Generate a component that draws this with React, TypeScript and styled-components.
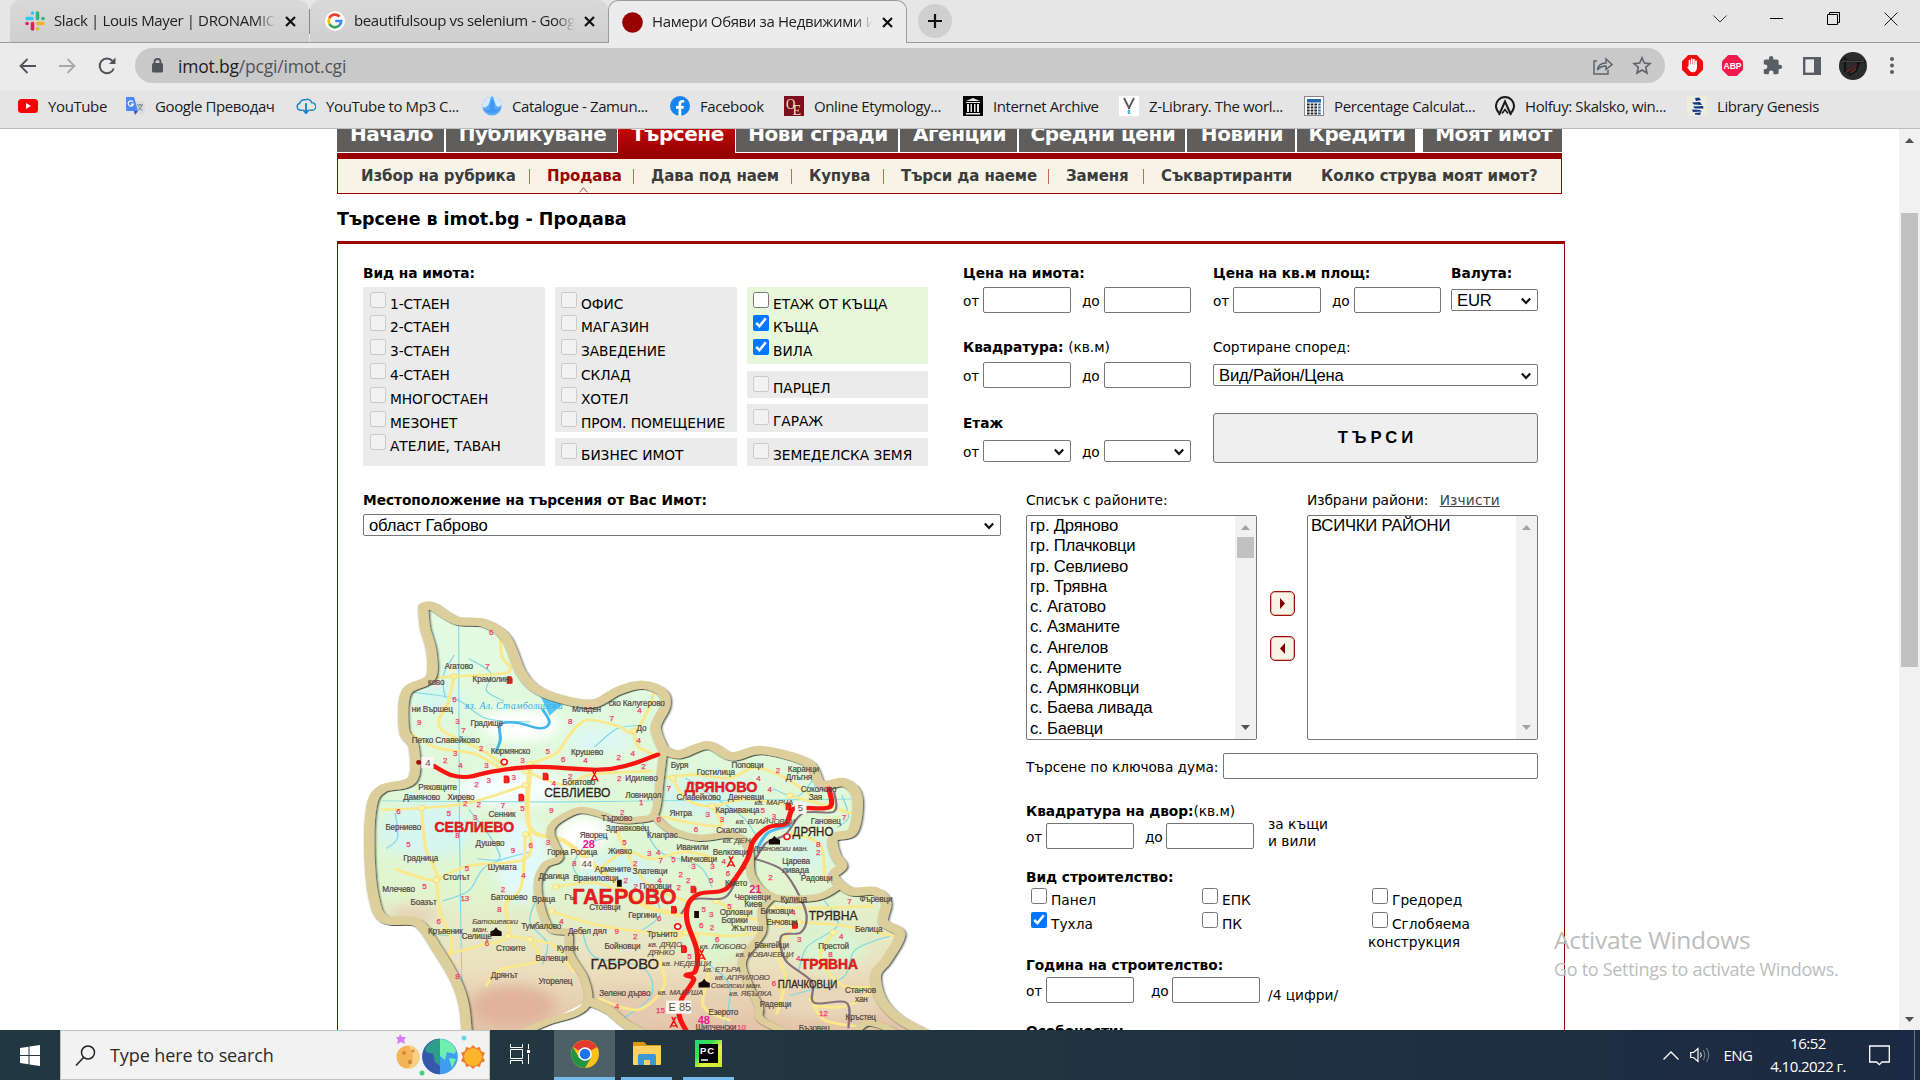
import React from "react";
import styled, { createGlobalStyle, css } from "styled-components";

const Global = createGlobalStyle`
  *, *::before, *::after { box-sizing: border-box; }
  body { margin: 0; background: #fff; overflow: hidden; }
`;

const ui = `"Open Sans", "Noto Sans", sans-serif`;
const verdana = `"DejaVu Sans", Verdana, sans-serif`;
const arial = `"Liberation Sans", Arial, sans-serif`;

const Screen = styled.div`
  width: 1920px;
  height: 1080px;
  display: flex;
  flex-direction: column;
  overflow: hidden;
  position: relative;
  background: #fff;
  font-family: ${verdana};
`;

/* ---------- browser chrome ---------- */

const TabStrip = styled.div`
  height: 43px;
  flex: none;
  display: flex;
  align-items: flex-start;
  padding-left: 10px;
  background: #e6e6e6;
  border-bottom: 1px solid #9c9c9c;
  font-family: ${ui};
`;

const Tab = styled.div<{ $active?: boolean; $w: number }>`
  width: ${(p) => p.$w}px;
  height: 42px;
  display: flex;
  align-items: center;
  padding: 0 5px 0 15px;
  background: linear-gradient(#d9d9d9, #cfcfcf);
  border-radius: 10px 10px 0 0;
  ${(p) =>
    p.$active &&
    css`
      height: 43px;
      background: #ececec;
      border: 1px solid #9c9c9c;
      border-bottom: 0;
      padding-left: 13px;
    `}
`;

const TabSplit = styled.div`
  width: 1px;
  height: 25px;
  margin-top: 9px;
  background: #8a8a8a;
`;

const TabTitle = styled.div`
  flex: 1;
  margin: 0 0 2px 9px;
  font-size: 15px;
  line-height: 22px;
  letter-spacing: -0.37px;
  color: #202124;
  white-space: nowrap;
  overflow: hidden;
  mask-image: linear-gradient(90deg, #000 91%, transparent);
`;

const TabClose = styled.div`
  width: 28px;
  display: flex;
  justify-content: center;
`;

const NewTab = styled.div`
  width: 34px;
  height: 34px;
  margin: 4px 0 0 11px;
  border-radius: 50%;
  background: #cfcfcf;
  display: flex;
  align-items: center;
  justify-content: center;
`;

const WindowButtons = styled.div`
  margin-left: auto;
  height: 37px;
  display: flex;
  align-items: center;
`;

const WinBtn = styled.div<{ $w: number }>`
  width: ${(p) => p.$w}px;
  display: flex;
  justify-content: center;
`;

const Toolbar = styled.div`
  height: 47px;
  flex: none;
  display: flex;
  align-items: center;
  padding-bottom: 2px;
  background: #ebebeb;
  font-family: ${ui};
`;

const ToolIcon = styled.div<{ $w: number }>`
  width: ${(p) => p.$w}px;
  display: flex;
  align-items: center;
  justify-content: center;
`;

const Address = styled.div`
  width: 1530px;
  height: 35px;
  margin-left: 2px;
  border-radius: 18px;
  background: #c9c9c9;
  display: flex;
  align-items: center;
  padding: 0 4px 0 17px;
`;

const Url = styled.div`
  flex: 1;
  margin-left: 14px;
  font-size: 17.5px;
  letter-spacing: -0.2px;
  color: #505357;
  b {
    font-weight: 400;
    color: #1c1d20;
  }
`;

const Bookmarks = styled.div`
  height: 39px;
  flex: none;
  display: flex;
  align-items: center;
  padding: 0 0 7px 18px;
  background: #e5e5e5;
  border-bottom: 1px solid #bdbdbd;
  font-family: ${ui};
`;

const Bookmark = styled.div<{ $w: number }>`
  width: ${(p) => p.$w}px;
  display: flex;
  align-items: center;
  gap: 10px;
  font-size: 15px;
  line-height: 20px;
  letter-spacing: -0.39px;
  white-space: nowrap;
  color: #1b1b1b;
  svg {
    flex: none;
  }
`;

/* ---------- site ---------- */

const PageArea = styled.div`
  height: 901px;
  flex: none;
  display: flex;
  overflow: hidden;
`;

const Site = styled.div`
  flex: 1;
  padding-left: 337px;
  overflow: hidden;
`;

const PageScroll = styled.div`
  width: 21px;
  height: 901px;
  background: #f1f1f1;
  display: flex;
  flex-direction: column;
  align-items: center;
  padding: 9px 0 8px;
`;

const PageThumb = styled.div`
  width: 17px;
  height: 454px;
  margin: 70px 0 auto;
  background: #c1c1c1;
`;

const Nav = styled.div`
  width: 1225px;
  height: 24px;
  display: flex;
  align-items: flex-start;
  overflow: hidden;
`;

const NavTab = styled.div<{ $w: number; $active?: boolean; $gap?: number }>`
  width: ${(p) => p.$w}px;
  height: ${(p) => (p.$active ? 24 : 23)}px;
  margin-right: ${(p) => p.$gap ?? 0}px;
  padding-left: 2px;
  background: ${(p) => (p.$active ? "linear-gradient(#c00808, #990000)" : "#5f5e5c")};
  color: #fff;
  font-weight: 700;
  font-size: 20px;
  line-height: 10px;
  letter-spacing: -0.45px;
  text-align: center;
  white-space: nowrap;
`;

const SubNav = styled.div`
  width: 1225px;
  height: 41px;
  display: flex;
  align-items: center;
  padding: 0 0 0 23px;
  background: #f7f4e7;
  border: 1px solid #990000;
  border-top: 6px solid #990000;
`;

const SubItem = styled.div<{ $w: number; $active?: boolean }>`
  width: ${(p) => p.$w}px;
  height: 34px;
  position: relative;
  font-size: 15px;
  font-weight: 700;
  line-height: 34px;
  letter-spacing: -0.1px;
  white-space: nowrap;
  color: ${(p) => (p.$active ? "#990000" : "#3c3c3c")};
  svg {
    position: absolute;
    left: 32px;
    bottom: 0;
  }
`;

const SubSep = styled.div`
  width: 1px;
  height: 15px;
  margin-right: 17px;
  background: #c4694a;
`;

const Heading = styled.h1`
  margin: 13px 0 10px;
  height: 24px;
  font-size: 17.5px;
  line-height: 24px;
  letter-spacing: -0.05px;
  font-weight: 700;
  color: #000;
`;

const FormBox = styled.div`
  width: 1228px;
  height: 900px;
  padding: 19px 26px 0 25px;
  border: 1px solid #990000;
  border-top-width: 3px;
`;

const Row = styled.div<{ $h?: number; $gap?: number }>`
  display: flex;
  align-items: flex-start;
  gap: ${(p) => p.$gap ?? 0}px;
  ${(p) => p.$h && `height: ${p.$h}px;`}
`;

const Col = styled.div<{ $w?: number; $h?: number }>`
  flex: none;
  display: flex;
  flex-direction: column;
  ${(p) => p.$w && `width: ${p.$w}px;`}
  ${(p) => p.$h && `height: ${p.$h}px;`}
`;

const Label = styled.div<{ $plain?: boolean; $mb?: number }>`
  height: 20px;
  margin-bottom: ${(p) => p.$mb ?? 4}px;
  font-size: 13.75px;
  line-height: 20px;
  font-weight: ${(p) => (p.$plain ? 400 : 700)};
  letter-spacing: ${(p) => (p.$plain ? -0.08 : -0.05)}px;
  white-space: nowrap;
  color: #000;
  span {
    font-weight: 400;
  }
`;

const OptionCard = styled.div<{ $h: number; $on?: boolean; $mb?: number; $pad?: number; $top?: number }>`
  height: ${(p) => p.$h}px;
  margin-bottom: ${(p) => p.$mb ?? 0}px;
  padding: ${(p) => p.$top ?? 4.6}px 0 0 ${(p) => p.$pad ?? 6}px;
  background: ${(p) => (p.$on ? "#e6f8d9" : "#ebebeb")};
`;

const OptionRow = styled.label`
  height: 23.8px;
  display: flex;
  align-items: flex-start;
  gap: 4px;
  font-size: 13.75px;
  line-height: 25.6px;
  letter-spacing: -0.05px;
  white-space: nowrap;
  color: #000;
`;

const Check = styled.input`
  width: 16px;
  height: 16px;
  margin: 0;
  flex: none;
`;

const Range = styled.div<{ $a?: number; $b?: number; $c?: number; $w?: number }>`
  display: grid;
  grid-template-columns:
    ${(p) => p.$a ?? 20}px ${(p) => p.$w ?? 88}px ${(p) => p.$b ?? 11}px ${(p) => p.$c ?? 22}px
    ${(p) => p.$w ?? 87}px;
  align-items: center;
  font-size: 13.75px;
  letter-spacing: -0.2px;
  color: #000;
`;

const RangeWord = styled.span`
  padding-top: 2px;
  line-height: 18px;
`;

const Field = styled.input`
  width: 100%;
  height: 26px;
  padding: 0 4px;
  border: 1px solid #767676;
  border-radius: 2px;
  background: #fff;
  font: 16.67px ${arial};
`;

const SelectBox = styled.div<{ $w?: number }>`
  ${(p) => (p.$w ? `width: ${p.$w}px;` : "")}
  height: 22px;
  display: flex;
  align-items: center;
  justify-content: space-between;
  padding: 1px 6px 0 5px;
  border: 1px solid #767676;
  border-radius: 2px;
  background: #fff;
  font-family: ${arial};
  font-size: 16.67px;
  line-height: 19px;
  letter-spacing: -0.17px;
  color: #000;
`;

const SearchButton = styled.button`
  width: 325px;
  height: 50px;
  padding: 0 0 0 4px;
  border: 1px solid #767676;
  border-radius: 3px;
  background: #efefef;
  font: 700 16.67px ${arial};
  letter-spacing: 4px;
  color: #000;
`;

const ListBox = styled.div`
  width: 231px;
  height: 225px;
  display: flex;
  border: 1px solid #767676;
  border-radius: 2px;
  background: #fff;
  overflow: hidden;
`;

const ListItems = styled.div`
  flex: 1;
  padding-left: 3px;
  font-family: ${arial};
  font-size: 16.67px;
  line-height: 20.25px;
  letter-spacing: -0.22px;
  color: #000;
  white-space: nowrap;
`;

const ListScroll = styled.div`
  width: 21px;
  background: #f1f1f1;
  display: flex;
  flex-direction: column;
  align-items: center;
  justify-content: space-between;
  padding: 9px 0;
`;

const ListThumb = styled.div`
  width: 17px;
  height: 21px;
  margin: 7px 0 auto;
  background: #c1c1c1;
`;

const Movers = styled.div`
  width: 50px;
  padding: 76px 0 0 13px;
  display: flex;
  flex-direction: column;
  gap: 20px;
`;

const Mover = styled.div`
  width: 25px;
  height: 25px;
  display: flex;
  align-items: center;
  justify-content: center;
  border: 1px solid #99100c;
  border-radius: 5px;
  box-shadow: inset 0 0 0 1px #e6b3a2;
  background: #f8f4e8;
`;

const Clear = styled.span`
  margin-left: 7px;
  color: #444;
  letter-spacing: 0.15px;
  text-decoration: underline;
`;

const Keyword = styled.div`
  display: grid;
  grid-template-columns: 197px 315px;
  align-items: center;
  margin: 13px 0 22px;
  font-size: 13.75px;
  letter-spacing: -0.05px;
  color: #000;
  white-space: nowrap;
`;

const KeywordText = styled.span`
  padding-top: 2px;
`;

const Note = styled.div<{ $mt: number }>`
  margin-top: ${(p) => p.$mt}px;
  font-size: 13.75px;
  line-height: 17px;
  white-space: nowrap;
  color: #000;
`;

const BuildGrid = styled.div`
  height: 68px;
  display: grid;
  grid-template-columns: 171px 170px 171px;
  grid-template-rows: 24px 22px 17px;
  align-content: start;
  padding: 1px 0 0 5px;
  font-size: 13.75px;
`;

const BuildRow = styled(OptionRow)`
  height: 24px;
  letter-spacing: 0;
`;

const BuildWrap = styled.div`
  grid-column: 3;
  margin-left: -4px;
  line-height: 17px;
  letter-spacing: -0.1px;
`;

/* ---------- overlay & taskbar ---------- */

const Watermark = styled.div`
  position: absolute;
  left: 1554px;
  top: 924px;
  font-family: ${ui};
  color: #bdbdbd;
  white-space: nowrap;
`;

const MarkTitle = styled.div`
  font-size: 24.5px;
  line-height: 32px;
  letter-spacing: -0.3px;
`;

const MarkText = styled.div`
  font-size: 18px;
  line-height: 26px;
  letter-spacing: -0.3px;
`;

const Taskbar = styled.div`
  height: 50px;
  flex: none;
  display: flex;
  align-items: stretch;
  background: linear-gradient(90deg, #213840 0%, #22363f 45%, #1e2f42 75%, #1b2942 100%);
  font-family: ${ui};
  color: #fff;
`;

const Start = styled.div`
  width: 60px;
  display: flex;
  align-items: center;
  justify-content: center;
`;

const SearchBar = styled.div`
  width: 430px;
  display: flex;
  align-items: center;
  padding: 0 4px 0 14px;
  background: #f2f2f2;
  border: 1px solid #c3c3c3;
  color: #2b2b2b;
  font-size: 18px;
`;

const SearchText = styled.div`
  flex: 1;
  margin-left: 14px;
  letter-spacing: -0.1px;
`;

const Task = styled.div<{ $w: number; $hot?: boolean; $run?: boolean; $ml?: number }>`
  width: ${(p) => p.$w}px;
  margin-left: ${(p) => p.$ml ?? 0}px;
  display: flex;
  align-items: center;
  justify-content: center;
  background: ${(p) => (p.$hot ? "#4d6068" : "transparent")};
  border-bottom: 3px solid ${(p) => (p.$run ? "#76b9ed" : "transparent")};
`;

const Tray = styled.div`
  margin-left: auto;
  display: flex;
  align-items: center;
`;

const TrayCell = styled.div<{ $w: number }>`
  width: ${(p) => p.$w}px;
  display: flex;
  justify-content: center;
  font-size: 15px;
  letter-spacing: -0.5px;
`;

const Clock = styled.div`
  width: 88px;
  margin-right: 6px;
  text-align: center;
  font-size: 15px;
  line-height: 23px;
  letter-spacing: -0.55px;
`;

const DesktopEdge = styled.div`
  width: 6px;
  height: 50px;
  border-left: 1px solid #6d7785;
`;

/* ---------- small drawings ---------- */

const Cross = () => (
  <svg width="11" height="11" viewBox="0 0 11 11">
    <path d="M1 1L10 10M10 1L1 10" stroke="#111" strokeWidth="2.2" />
  </svg>
);

const Chevron = () => (
  <svg width="10" height="8" viewBox="0 0 10 8">
    <path d="M0.8 1.6L5 5.9L9.2 1.6" fill="none" stroke="#111" strokeWidth="2.2" />
  </svg>
);

const Tri = ({ down, color = "#505050" }: { down?: boolean; color?: string }) => (
  <svg width="9" height="5" viewBox="0 0 9 5">
    <path d={down ? "M0 0H9L4.5 5Z" : "M0 5H9L4.5 0Z"} fill={color} />
  </svg>
);

const SlackIcon = () => (
  <svg width="20" height="20" viewBox="0 0 20 20" strokeWidth="3.6" strokeLinecap="round">
    <path d="M2 7.5H7M7.5 2V2.1" stroke="#36c5f0" />
    <path d="M12.5 2V7.5M17.9 7.5H18" stroke="#2eb67d" />
    <path d="M12.5 12.5H18M12.5 17.9V18" stroke="#ecb22e" />
    <path d="M7.5 12.5V18M2 12.5H2.1" stroke="#e01e5a" />
  </svg>
);

const GoogleIcon = () => (
  <svg width="20" height="20" viewBox="0 0 20 20">
    <circle cx="10" cy="10" r="10" fill="#fff" />
    <g fill="none" strokeWidth="2.7">
      <path d="M14.6 5.6A6.3 6.3 0 0 0 4.4 7.1" stroke="#ea4335" />
      <path d="M4.4 7.1A6.3 6.3 0 0 0 4.4 12.9" stroke="#fbbc05" />
      <path d="M4.4 12.9A6.3 6.3 0 0 0 14 14.8" stroke="#34a853" />
      <path d="M14 14.8A6.3 6.3 0 0 0 16.2 10H10.2" stroke="#4285f4" />
    </g>
  </svg>
);

const YouTubeIcon = () => (
  <svg width="20" height="20" viewBox="0 0 20 20">
    <rect y="3" width="20" height="14" rx="3.5" fill="#f00" />
    <path d="M8 7L13 10L8 13Z" fill="#fff" />
  </svg>
);

const TranslateIcon = () => (
  <svg width="20" height="20" viewBox="0 0 20 20">
    <rect x="8" y="5" width="12" height="13" rx="1" fill="#dcdcdc" />
    <path d="M12 9H18M15 8V9M17 9C16 12 14 13.5 12.5 14.5M13.5 10.5C14 12 16 14 17.5 14.5" stroke="#607d8b" fill="none" />
    <path d="M1 1H9L13 15H2A1 1 0 0 1 1 14Z" fill="#4c8bf5" />
    <path d="M9 15H13L10 19Z" fill="#3050c8" />
    <path d="M8 6A2.6 2.6 0 1 0 8.3 8.2H6" stroke="#fff" strokeWidth="1.2" fill="none" />
  </svg>
);

const CloudIcon = () => (
  <svg width="20" height="20" viewBox="0 0 21 20" fill="none" stroke="#1a86c8" strokeWidth="1.5">
    <path d="M7 14.5H4.5A3.8 3.8 0 0 1 4 7.1A4.5 4.5 0 0 1 9.5 3.5A5 5 0 0 1 16.5 6.5A4 4 0 0 1 17 14.5H14" />
    <path d="M10.5 7V17M7.5 14L10.5 17.5L13.5 14" strokeWidth="2" />
  </svg>
);

const ZamundaIcon = () => (
  <svg width="20" height="20" viewBox="0 0 20 20">
    <circle cx="10" cy="10" r="9.6" fill="#5aa9f5" />
    <path d="M.6 9A9.6 9.6 0 0 1 9 .5L7 8C5 11 3 12 .8 11ZM11 .5A9.6 9.6 0 0 1 19.500 9C17 12 14 11 13.5 8Z" fill="#d4ebff" />
    <path d="M8 13C8.5 9 8 5 10 3.5C12 5 12 9 12.5 12.5C14 14 17 13.5 18 12.5C16 18 5 18.5 2 13C4 14.5 7 15 8 13Z" fill="#3f97f3" />
  </svg>
);

const FacebookIcon = () => (
  <svg width="20" height="20" viewBox="0 0 20 20">
    <circle cx="10" cy="10" r="10" fill="#1583f0" />
    <path d="M8.5 20V12.8H6V10H8.5V8C8.5 5.3 10 4 12.2 4L14.2 4.2V6.6H12.8C11.6 6.6 11.3 7.3 11.3 8.2V10H14L13.5 12.8H11.3V20Z" fill="#fff" />
  </svg>
);

const EtymIcon = () => (
  <svg width="20" height="20" viewBox="0 0 20 20">
    <rect width="20" height="20" fill="#7b0f1f" />
    <text x="2" y="13" fontSize="15" textLength="9" lengthAdjust="spacingAndGlyphs" fontFamily="Liberation Serif, serif" fill="#f3e3c3">O</text>
    <text x="8.500" y="18.500" fontSize="14" fontFamily="Liberation Serif, serif" fill="#f3e3c3">E</text>
  </svg>
);

const ArchiveIcon = () => (
  <svg width="20" height="20" viewBox="0 0 20 20">
    <rect width="20" height="20" fill="#000" />
    <path d="M3 5L10 2L17 5ZM3 6H17V7H3ZM3 17H17V18.5H3ZM4 8H6V16H4ZM7.5 8H9V16H7.5ZM11 8H12.5V16H11ZM14 8H16V16H14Z" fill="#e8e8e8" />
  </svg>
);

const ZLibIcon = () => (
  <svg width="20" height="20" viewBox="0 0 20 20">
    <rect width="20" height="20" fill="#fff" />
    <path d="M5 2L10 12L15 2" stroke="#555" strokeWidth="1.8" fill="none" />
    <path d="M10 11V13" stroke="#555" strokeWidth="2" />
    <path d="M10 14V18" stroke="#45b8d8" strokeWidth="2.5" />
  </svg>
);

const CalcIcon = () => (
  <svg width="20" height="20" viewBox="0 0 20 20">
    <rect x=".5" y=".5" width="19" height="19" fill="#fff" stroke="#888" />
    <rect x="3" y="3" width="14" height="3.5" fill="#2467a8" />
    {[8, 11, 14, 17].map((y) =>
      [3, 6.7, 10.4, 14.1].map((x) => (
        <rect key={`${x}-${y}`} x={x} y={y - 0.5} width="2.6" height="2" fill={x > 14 ? "#2467a8" : "#222"} />
      ))
    )}
  </svg>
);

const HolfuyIcon = () => (
  <svg width="20" height="20" viewBox="0 0 20 20" fill="none" stroke="#1a1a1a" strokeWidth="2">
    <path d="M5 17.5A9 9 0 1 1 15 17.5" />
    <path d="M4 19L10 5.5L16 19" />
    <path d="M7 17.5L10 13.5L13 17.5" strokeWidth="1.6" />
  </svg>
);

const GenesisIcon = () => (
  <svg width="20" height="20" viewBox="0 0 20 20">
    <rect width="20" height="20" fill="#ececdf" />
    <path d="M8 2L12 1.5L14 4L9 5ZM5 6.500L13 6L15 9L7 8.500ZM6 10.500L16 10L16.500 12.500L8 12.500ZM5 13.500L13 14L15 15.500L6 16ZM8 17L14 16.500L13 19L8 18.500Z" fill="#0f3585" />
  </svg>
);

const Hand = () => (
  <svg width="21" height="21" viewBox="0 0 21 21">
    <path d="M6.2 0H14.8L21 6.2V14.8L14.8 21H6.2L0 14.8V6.2Z" fill="#ee0c0c" />
    <path d="M7.5 11V5.5M9.7 10V4.2M11.9 10V4.5M14 11V6.2" stroke="#fff" strokeWidth="1.7" strokeLinecap="round" />
    <path d="M6.7 9.5H14.9V12.5C14.9 15.5 13.5 17.3 11 17.3C9 17.3 7.5 16 5.2 12L6.7 11.5Z" fill="#fff" />
  </svg>
);

const Abp = () => (
  <svg width="21" height="21" viewBox="0 0 21 21">
    <path d="M6.2 0H14.8L21 6.2V14.8L14.8 21H6.2L0 14.8V6.2Z" fill="#f11c4b" />
    <text x="10.5" y="14" fontSize="9.5" fontWeight="700" textAnchor="middle" textLength="18" lengthAdjust="spacingAndGlyphs" fontFamily="Liberation Sans, sans-serif" fill="#fff">ABP</text>
  </svg>
);

const Puzzle = () => (
  <svg width="21" height="21" viewBox="0 0 24 24">
    <path d="M20.5 11H19V7c0-1.100-.9-2-2-2h-4V3.500a2.500 2.500 0 0 0-5 0V5H4c-1.100 0-2 .9-2 2v3.800h1.500a2.700 2.700 0 0 1 0 5.400H2V20c0 1.100.9 2 2 2h3.800v-1.500a2.700 2.700 0 0 1 5.400 0V22H17c1.100 0 2-.9 2-2v-4h1.500a2.500 2.500 0 0 0 0-5z" fill="#5a5d62" />
  </svg>
);

/* ---------- map ---------- */

type Pt = [number, number];
const SX = 0.43367;
const SY = 0.35075;

const curve = (pts: Pt[]) => {
  let d = `M${pts[0][0]} ${pts[0][1]}`;
  for (let i = 0; i < pts.length - 1; i++) {
    const a = pts[i - 1] ?? pts[i];
    const b = pts[i];
    const c = pts[i + 1];
    const e = pts[i + 2] ?? c;
    d += `C${b[0] + (c[0] - a[0]) / 6} ${b[1] + (c[1] - a[1]) / 6} ${c[0] - (e[0] - b[0]) / 6} ${c[1] - (e[1] - b[1]) / 6} ${c[0]} ${c[1]}`;
  }
  return d;
};

const west: Pt[] = [[295, 1590], [288, 1500], [270, 1430], [225, 1335], [180, 1262], [105, 1252], [80, 1190], [70, 1060], [75, 930], [100, 880], [168, 855], [172, 760], [150, 715], [155, 605], [210, 565], [213, 490], [198, 420], [194, 362]];
const north: Pt[] = [[194, 362], [215, 360], [270, 400], [335, 408], [385, 450], [420, 550], [460, 600], [530, 630], [590, 636], [645, 600], [700, 584], [745, 605], [752, 645], [730, 705], [748, 768]];
const east: Pt[] = [[748, 768], [785, 782], [850, 756], [905, 788], [975, 770], [1080, 806], [1112, 868], [1165, 862], [1195, 905], [1185, 1000], [1140, 1020], [1145, 1070], [1160, 1100], [1140, 1130], [1180, 1172], [1235, 1172], [1262, 1205], [1255, 1260], [1294, 1295], [1262, 1370], [1238, 1410], [1250, 1480], [1290, 1535], [1350, 1575]];
const sevlievoEast: Pt[] = [[748, 768], [740, 850], [728, 950], [690, 968], [640, 968], [590, 948], [550, 942], [500, 975], [488, 1010], [508, 1075], [475, 1098], [458, 1150], [468, 1230], [490, 1282], [528, 1292], [532, 1350], [565, 1420], [574, 1485], [545, 1520], [480, 1545], [400, 1590]];
const dryanovoSouth: Pt[] = [[728, 960], [765, 998], [830, 1020], [910, 1012], [945, 1050], [952, 1130], [1000, 1188], [1100, 1190], [1150, 1160]];
const tryavnaWest: Pt[] = [[1000, 1188], [975, 1225], [975, 1290], [930, 1370], [945, 1440], [968, 1500], [975, 1540], [1060, 1590]];
const gabrovoSouth: Pt[] = [[574, 1485], [620, 1510], [660, 1550], [720, 1590]];

const land = `${curve(west)}${curve(north).replace(/^M[^C]+/, "")}${curve(east).replace(/^M[^C]+/, "")}V1590H720L620 1510L574 1485L480 1545L400 1590Z`;

const yellowRoads: Pt[][] = [
  [[372, 440], [375, 500], [390, 548], [265, 560], [215, 565]],
  [[265, 560], [250, 640], [230, 685], [245, 720], [330, 770], [385, 820]],
  [[160, 720], [230, 765], [310, 780], [370, 820]],
  [[440, 810], [500, 780], [530, 730], [570, 685], [640, 700], [680, 720], [715, 650], [725, 610]],
  [[680, 715], [690, 760], [730, 785]],
  [[440, 820], [440, 990], [520, 1030], [600, 1110], [700, 1210], [790, 1240]],
  [[430, 870], [300, 920], [190, 935], [100, 940]],
  [[430, 830], [520, 870], [580, 840], [720, 830]],
  [[190, 935], [200, 1050], [225, 1140], [130, 1110]],
  [[225, 1140], [300, 1100], [430, 1080], [440, 1000]],
  [[225, 1140], [235, 1240], [260, 1310], [250, 1370]],
  [[430, 1010], [420, 1160], [385, 1210], [390, 1300], [320, 1330], [255, 1350]],
  [[390, 1300], [440, 1310], [500, 1330], [540, 1400]],
  [[440, 1310], [460, 1370], [375, 1395], [340, 1440]],
  [[740, 850], [820, 840], [900, 850], [960, 820], [1030, 850], [1100, 910]],
  [[770, 850], [800, 910], [860, 930], [940, 910], [1040, 930]],
  [[860, 930], [880, 985], [800, 975], [750, 960]],
  [[600, 1110], [660, 1060], [720, 1080], [800, 1060], [870, 1080]],
  [[640, 1000], [680, 1100], [720, 1160], [800, 1200]],
  [[500, 1160], [600, 1150], [700, 1210]],
  [[490, 1230], [600, 1270], [720, 1290], [800, 1290], [900, 1300], [970, 1290]],
  [[800, 1290], [740, 1350], [750, 1440], [690, 1510], [600, 1480]],
  [[820, 1300], [850, 1400], [840, 1500], [900, 1540]],
  [[870, 1200], [950, 1250], [1060, 1260], [1160, 1270], [1280, 1300]],
  [[1000, 1220], [1110, 1220], [1230, 1215]],
  [[1060, 1260], [1010, 1340], [1030, 1420], [1010, 1520]],
  [[1140, 1290], [1110, 1360], [1160, 1440], [1230, 1450], [1170, 1500], [1100, 1500]],
  [[1090, 1480], [1120, 1540], [1210, 1560]],
  [[1040, 900], [1130, 930], [1180, 950]],
  [[1050, 1010], [1110, 1040], [1120, 1140]],
];

const rivers: Pt[][] = [
  [[276, 410], [278, 1000], [285, 1568]],
  [[100, 915], [500, 918], [720, 915], [1180, 910]],
  [[300, 510], [350, 550], [340, 600], [380, 630]],
  [[265, 500], [240, 560], [245, 620]],
  [[170, 605], [270, 625], [340, 680], [440, 690]],
  [[590, 760], [640, 710], [690, 700]],
  [[440, 1060], [340, 1100], [300, 1170], [240, 1200]],
  [[130, 950], [135, 1020], [110, 1050]],
  [[300, 940], [350, 1020], [370, 1080], [320, 1080]],
  [[460, 1180], [440, 1260], [480, 1320], [470, 1380]],
  [[255, 1300], [190, 1290]],
  [[800, 850], [860, 900], [930, 960], [960, 1010]],
  [[1110, 820], [1060, 900], [1000, 880]],
  [[1160, 900], [1175, 960], [1150, 990]],
  [[620, 1020], [570, 1040], [540, 1100], [560, 1140]],
  [[700, 980], [740, 1060], [830, 1100], [860, 1160]],
  [[560, 1280], [590, 1360], [700, 1390], [720, 1470], [650, 1540]],
  [[840, 1370], [900, 1440], [890, 1560]],
  [[1270, 1300], [1190, 1340], [1160, 1420], [1040, 1470]],
  [[1120, 1200], [1150, 1270], [1080, 1330], [1060, 1400]],
  [[720, 1160], [740, 1240], [690, 1290]],
];

const redRoads: Pt[][] = [
  [[218, 815], [260, 842], [300, 846], [350, 832], [450, 818], [600, 826], [670, 812], [735, 783]],
  [[1130, 880], [1132, 932], [1070, 935], [1045, 940], [1030, 980], [990, 990], [955, 1030], [942, 1080], [905, 1150], [880, 1172], [830, 1180], [805, 1210], [803, 1260], [825, 1340], [822, 1400], [800, 1412], [818, 1425], [790, 1480], [785, 1530], [810, 1590]],
];

const railways: Pt[][] = [
  [[1142, 890], [1142, 945], [1070, 950], [1030, 1010], [985, 1035], [960, 1080], [925, 1120], [890, 1190], [820, 1195], [790, 1235]],
  [[960, 1080], [1020, 1110], [1055, 1170], [1078, 1240], [1065, 1290], [1020, 1300], [1030, 1370], [1090, 1430], [1095, 1490], [1170, 1490], [1175, 1560]],
];

type Tag = [number, number, string];
const villages: Tag[] = [
  [243, 538, "Агатово"], [308, 576, "Крамолин"], [205, 585, "ково"], [168, 661, "ни Вършец"], [303, 702, "Градище"],
  [168, 750, "Петко Славейково"], [350, 780, "Кормянско"], [535, 783, "Крушево"], [537, 662, "Младен"], [622, 643, "ско Калугерово"],
  [686, 717, "До"], [515, 869, "Богатово"], [660, 858, "Идилево"], [183, 885, "Ряховците"], [148, 912, "Дамяново"], [250, 912, "Хирево"],
  [660, 908, "Ловнидол"], [345, 961, "Сенник"], [107, 999, "Берниево"], [315, 1044, "Душево"], [148, 1086, "Градница"], [343, 1113, "Шумата"],
  [240, 1141, "Столът"], [100, 1176, "Млечево"], [165, 1211, "Боазът"], [350, 1197, "Батошево"], [445, 1202, "Враца"], [420, 1279, "Тумбалово"],
  [205, 1295, "Кръвеник"], [283, 1309, "Селище"], [362, 1343, "Стоките"], [502, 1342, "Купен"], [453, 1370, "Валевци"], [350, 1420, "Дрянът"],
  [460, 1437, "Угорелец"], [605, 973, "Търхово"], [615, 1001, "Здравковец"], [710, 1022, "Клапрас"], [555, 1022, "Яворец"], [480, 1069, "Горна Росица"],
  [620, 1066, "Живко"], [778, 1056, "Иванили"], [788, 1090, "Мичковци"], [590, 1117, "Армените"], [677, 1122, "Златевци"], [540, 1144, "Враниловци"],
  [460, 1138, "Драгица"], [693, 1166, "Поповци"], [520, 1198, "Гъ"], [577, 1225, "Стоевци"], [667, 1249, "Гергини"], [528, 1293, "Дебел дял"],
  [710, 1302, "Трънито"], [612, 1337, "Бойновци"], [600, 1470, "Зелено дърво"], [852, 1526, "Езерото"], [822, 1567, "Шипченски"], [765, 820, "Буря"],
  [825, 840, "Гостилица"], [905, 820, "Поповци"], [1035, 832, "Каранци"], [1030, 856, "Длъгня"], [1065, 890, "Соколово"], [1083, 911, "Зая"],
  [778, 911, "Славейково"], [897, 911, "Денчевци"], [868, 948, "Караиванца"], [762, 959, "Янтра"], [1088, 980, "Гановец"], [870, 1006, "Скалско"],
  [862, 1069, "Велковци"], [1022, 1095, "Царева"], [1022, 1120, "ливада"], [1065, 1143, "Радовци"], [912, 1197, "Черневци"], [890, 1157, "Кмето"],
  [935, 1218, "Киев"], [878, 1239, "Орловци"], [972, 1238, "Бижовци"], [882, 1263, "Борики"], [905, 1287, "Жълтеш"], [1018, 1202, "Кулица"],
  [985, 1268, "Енчовци"], [1190, 1288, "Белица"], [1200, 1202, "Фъревци"], [958, 1334, "Бангейци"], [1105, 1337, "Престой"], [1167, 1464, "Станчов"],
  [1190, 1488, "хан"], [970, 1502, "Радевци"], [1168, 1539, "Кръстец"], [1060, 1570, "Бъзовец"],
];
const quarters: Tag[] = [
  [958, 927, "кв. МАРЧА"], [915, 980, "кв. ВЛАЙЧОВЦИ"], [885, 1035, "кв. ДЕН"], [955, 1058, "Дряновски ман."], [307, 1265, "Батошевски"], [308, 1288, "ман."],
  [713, 1331, "кв. ДЯДО"], [713, 1353, "ДЯНКО"], [832, 1337, "кв. ЛЮБОВО"], [915, 1359, "кв. КОВАЧЕВЦИ"], [745, 1386, "кв. НЕДЕВЦИ"], [840, 1402, "кв. ЕТЪРА"],
  [867, 1425, "кв. АПРИЛОВО"], [857, 1448, "Соколски ман."], [735, 1468, "кв. МАЛУША"], [900, 1472, "кв. ЯБЪЛКА"],
];
const distances: Tag[] = [
  [337, 540, "7"], [346, 442, "6"], [261, 634, "6"], [180, 698, "9"], [268, 697, "3"], [282, 720, "7"], [528, 697, "8"], [624, 687, "7"], [688, 663, "4"],
  [686, 750, "4"], [323, 772, "2"], [263, 786, "3"], [240, 806, "2"], [275, 822, "4"], [335, 822, "3"], [418, 806, "3"], [476, 780, "5"], [512, 804, "6"],
  [563, 808, "4"], [640, 798, "2"], [672, 788, "4"], [697, 824, "2"], [641, 858, "2"], [528, 852, "2"], [490, 872, "4"], [398, 856, "3"], [340, 864, "3"],
  [312, 876, "2"], [286, 930, "2"], [317, 932, "2"], [373, 936, "7"], [418, 944, "5"], [484, 950, "9"], [132, 952, "6"], [248, 958, "5"], [309, 970, "3"],
  [155, 1045, "5"], [268, 1020, "8"], [396, 1064, "9"], [437, 1048, "6"], [477, 1040, "3"], [420, 1134, "4"], [290, 1116, "5"], [192, 1166, "5"],
  [280, 1200, "13"], [373, 1175, "2"], [365, 1232, "8"], [336, 1328, "6"], [225, 1265, "6"], [268, 1422, "8"], [1007, 836, "2"], [962, 858, "4"], [988, 890, "4"],
  [755, 886, "7"], [845, 962, "3"], [878, 974, "3"], [972, 950, "5"], [998, 966, "3"], [818, 1004, "6"], [732, 974, "6"], [692, 928, "1"], [648, 956, "2"],
  [653, 1042, "5"], [710, 1072, "3"], [731, 1068, "4"], [737, 1092, "7"], [766, 1088, "5"], [678, 1100, "2"], [783, 1132, "2"], [812, 1110, "3"], [856, 1108, "3"],
  [882, 1096, "4"], [892, 1128, "6"], [853, 1148, "5"], [734, 1150, "4"], [656, 1148, "2"], [679, 1166, "2"], [778, 1168, "2"], [800, 1150, "2"], [836, 1232, "5"],
  [853, 1246, "3"], [830, 1278, "6"], [855, 1283, "2"], [867, 1316, "6"], [895, 1222, "5"], [635, 1294, "9"], [678, 1310, "2"], [733, 1258, "6"], [803, 1366, "5"],
  [636, 1508, "4"], [731, 1520, "15"], [918, 1568, "10"], [1100, 1068, "2"], [1100, 1046, "8"], [990, 1140, "2"], [1160, 970, "7"], [1172, 1210, "7"],
  [1056, 1316, "3"], [1153, 1308, "4"], [1054, 1370, "4"], [1128, 1360, "8"], [1107, 1528, "12"], [998, 1442, "6"], [508, 1266, "4"], [537, 1100, "8"], [1043, 1240, "4"],
];
const towns: [number, number, string, number, boolean, number][] = [
  [473, 905, "СЕВЛИЕВО", 13.5, false, 153], [220, 1003, "СЕВЛИЕВО", 15.5, true, 184], [797, 889, "ДРЯНОВО", 15.5, true, 168], [1046, 1015, "ДРЯНО", 13.5, false, 94],
  [538, 1208, "ГАБРОВО", 22, true, 240], [580, 1393, "ГАБРОВО", 15.5, false, 158], [1083, 1254, "ТРЯВНА", 13.5, false, 113], [1065, 1395, "ТРЯВНА", 15, true, 132],
  [1012, 1449, "ПЛАЧКОВЦИ", 11, false, 137],
];
const pumps: Pt[] = [[394, 570], [387, 853], [477, 845], [421, 905], [818, 1167], [773, 1225], [796, 1337], [1052, 1268], [1037, 930]];
const camps: Pt[] = [[589, 846], [904, 1090], [836, 1355], [772, 1548]];

const MapSvg = styled.svg`
  display: block;
  margin: 49px 0 0 -24px;
`;

const RegionMap = () => (
  <MapSvg width="662" height="460" viewBox="0 105 662 460">
    <defs>
      <linearGradient id="land" x1="0" y1="0" x2="0" y2="1">
        <stop offset="0" stopColor="#e3fbe3" />
        <stop offset=".3" stopColor="#e0f9dd" />
        <stop offset=".66" stopColor="#e0f5cf" />
        <stop offset=".84" stopColor="#ebdfbd" />
        <stop offset="1" stopColor="#e2c0a6" />
      </linearGradient>
      <filter id="edge" x="-5%" y="-5%" width="112%" height="112%">
        <feDropShadow dx="2.5" dy="2.5" stdDeviation="2" floodColor="#1d2a20" floodOpacity=".9" />
      </filter>
      <filter id="soft" x="-30%" y="-30%" width="160%" height="160%">
        <feGaussianBlur stdDeviation="16" />
      </filter>
      <clipPath id="landClip">
        <path d={land} />
      </clipPath>
    </defs>
    <g transform={`scale(${SX} ${SY})`} fill="none" strokeLinejoin="round" strokeLinecap="round">
      <path d={land} fill="url(#land)" />
      <g clipPath="url(#landClip)">
        <g filter="url(#soft)">
          <ellipse cx="420" cy="700" rx="90" ry="45" fill="#fff" />
          <ellipse cx="400" cy="880" rx="130" ry="50" fill="#f4fdff" />
          <ellipse cx="600" cy="740" rx="80" ry="40" fill="#ddf8f2" />
          <ellipse cx="230" cy="620" rx="60" ry="40" fill="#d6f7ef" />
          <ellipse cx="420" cy="1080" rx="60" ry="120" fill="#e2f9fb" />
          <ellipse cx="200" cy="1000" rx="110" ry="80" fill="#d6f6ef" />
          <ellipse cx="560" cy="1010" rx="60" ry="50" fill="#fff" />
          <ellipse cx="640" cy="1120" rx="90" ry="60" fill="#d3f5ec" />
          <ellipse cx="850" cy="900" rx="110" ry="60" fill="#d6f5ea" />
          <ellipse cx="1080" cy="1060" rx="70" ry="60" fill="#d8f6e6" />
          <ellipse cx="400" cy="1500" rx="100" ry="60" fill="#e0b49c" />
          <ellipse cx="170" cy="1240" rx="60" ry="25" fill="#e6d2b4" />
          <ellipse cx="680" cy="1500" rx="80" ry="45" fill="#e6cab0" />
          <ellipse cx="860" cy="1300" rx="70" ry="90" fill="#ddf4cf" />
          <ellipse cx="1130" cy="1330" rx="90" ry="70" fill="#daf3d0" />
          <ellipse cx="1120" cy="1490" rx="120" ry="40" fill="#e9d8bb" />
        </g>
        {rivers.map((r, i) => (
          <path key={i} d={curve(r)} stroke="#7ed8e4" strokeWidth={i < 2 ? 2.5 : 3} />
        ))}
        <path d="M460 605L515 640L485 672L478 650Z" fill="#58c4f2" />
        <path d={curve([[470, 655], [485, 690], [465, 708], [410, 692], [372, 697], [372, 740], [362, 775]])} stroke="#45b5ee" strokeWidth="7" />
        {yellowRoads.map((r, i) => (
          <path key={i} d={curve(r)} stroke="#fbe88b" strokeWidth={i === 5 ? 12 : 7.5} />
        ))}
        {yellowRoads.map((r, i) => (
          <circle key={i} cx={r[0][0]} cy={r[0][1]} r="8" fill="#fdf3a8" stroke="#e8d36a" strokeWidth="1.5" />
        ))}
        {railways.map((r, i) => (
          <path key={i} d={curve(r)} stroke="#85727c" strokeWidth="5.5" />
        ))}
        <path d={curve([[1040, 985], [990, 1005], [965, 1050]])} stroke="#4cb9f0" strokeWidth="8" />
      </g>
      <g stroke="#dccf9c" strokeWidth="24" filter="url(#edge)">
        <path d={curve(west)} />
        <path d={curve(north)} />
        <path d={curve(east)} />
        <path d={curve(gabrovoSouth)} />
        <g strokeWidth="18">
          <path d={curve(sevlievoEast)} />
          <path d={curve(dryanovoSouth)} />
          <path d={curve(tryavnaWest)} />
          <path d={curve([[1180, 1590], [1215, 1548], [1260, 1560], [1300, 1590]])} />
        </g>
      </g>
      {redRoads.map((r, i) => (
        <path key={i} d={curve(r)} stroke="#fb1510" strokeWidth="12" />
      ))}
      {pumps.map(([x, y], i) => (
        <path key={i} d={`M${x - 6} ${y - 9}h9v19h-9zM${x + 5} ${y - 5}v14`} fill="#f22" stroke="#e11" strokeWidth="2.5" />
      ))}
      {camps.map(([x, y], i) => (
        <path key={i} d={`M${x - 8} ${y + 12}L${x + 4} ${y - 16}M${x + 8} ${y + 12}L${x - 4} ${y - 16}M${x - 6} ${y + 8}h12`} stroke="#f01010" strokeWidth="3.5" />
      ))}
      <g fill="#160808">
        <path d="M349 1300v-13l8-4 5-8 5 8 8 4v13z" />
        <path d="M991 1039v-13l8-4 5-8 5 8 8 4v13z" />
        <path d="M829 1447v-13l8-4 5-8 5 8 8 4v13z" />
        <path d="M641 1140h11v20h-11zM819 1229h11v20h-11z" />
      </g>
      <g fill="#fff" stroke="#f01010" strokeWidth="4">
        <ellipse cx="381" cy="804" rx="7" ry="8" />
        <ellipse cx="781" cy="1273" rx="7" ry="8" />
        <ellipse cx="1033" cy="1017" rx="7" ry="8" />
      </g>
      <ellipse cx="184" cy="805" rx="6" ry="7" fill="#a01010" />
      <g fill="#fbf6f2">
        <path d="M190 790h28v32h-28zM1051 918h27v34h-27zM556 1078h30v30h-30zM754 1484h58v38h-58z" />
      </g>
    </g>
    <g fontFamily="Liberation Sans, sans-serif">
      <g fontSize="8.2" fill="#54453f" stroke="#54453f" strokeWidth=".2" letterSpacing="-.15">
        {villages.map(([x, y, t], i) => (
          <text key={i} x={x * SX} y={y * SY}>{t}</text>
        ))}
      </g>
      <g fontSize="7.8" fontStyle="italic" fill="#5f4b46" stroke="#5f4b46" strokeWidth=".15" letterSpacing="-.1">
        {quarters.map(([x, y, t], i) => (
          <text key={i} x={x * SX} y={y * SY}>{t}</text>
        ))}
      </g>
      <g fontSize="8" fill="#f23a68" stroke="#f23a68" strokeWidth=".25">
        {distances.map(([x, y, t], i) => (
          <text key={i} x={x * SX} y={y * SY}>{t}</text>
        ))}
      </g>
      <text x={290 * SX} y={652 * SY} fontSize="10" fontStyle="italic" fontFamily="Liberation Serif, serif" fill="#35aee6" textLength="98">яз. Ал. Стамболийски</text>
      {towns.map(([x, y, t, size, red, w], i) => (
        <text
          key={i}
          x={x * SX}
          y={y * SY}
          fontSize={size}
          textLength={w * SX}
          lengthAdjust="spacingAndGlyphs"
          fontWeight={red ? 700 : 400}
          fill={red ? "#ee1c22" : "#33241f"}
          stroke={red ? "#c3151a" : "#33241f"}
          strokeWidth={red ? 0.5 : 0.3}
        >
          {t}
        </text>
      ))}
      <g fontSize="9.5" fill="#554">
        <text x={199 * SX} y={815 * SY}>4</text>
        <text x={1058 * SX} y={944 * SY}>5</text>
        <text x={559 * SX} y={1102 * SY}>44</text>
        <text x={760 * SX} y={1514 * SY} fontSize="11">E 85</text>
      </g>
      <g fontSize="11" fontWeight="700" fill="#f0148c">
        <text x={562 * SX} y={1050 * SY}>28</text>
        <text x={827 * SX} y={1550 * SY}>48</text>
        <text x={946 * SX} y={1178 * SY}>21</text>
      </g>
    </g>
  </MapSvg>
);

/* ---------- data ---------- */

const bookmarks: [string, number, () => React.JSX.Element][] = [
  ["YouTube", 107, YouTubeIcon],
  ["Google Преводач", 171, TranslateIcon],
  ["YouTube to Mp3 C...", 186, CloudIcon],
  ["Catalogue - Zamun...", 188, ZamundaIcon],
  ["Facebook", 114, FacebookIcon],
  ["Online Etymology...", 179, EtymIcon],
  ["Internet Archive", 156, ArchiveIcon],
  ["Z-Library. The worl...", 185, ZLibIcon],
  ["Percentage Calculat...", 191, CalcIcon],
  ["Holfuy: Skalsko, win...", 192, HolfuyIcon],
  ["Library Genesis", 150, GenesisIcon],
];

const navTabs: [string, number, number][] = [
  ["Начало", 107, 2], ["Публикуване", 171, 1], ["Търсене", 117, 1], ["Нови сгради", 162, 2], ["Агенции", 117, 2],
  ["Средни цени", 166, 2], ["Новини", 108, 2], ["Кредити", 118, 8], ["Моят имот", 139, 0],
];

const subItems: [string, number, boolean][] = [
  ["Избор на рубрика", 168, true], ["Продава", 86, true], ["Дава под наем", 140, true], ["Купува", 74, true],
  ["Търси да наеме", 147, true], ["Заменя", 77, true], ["Съквартиранти", 160, false], ["Колко струва моят имот?", 220, false],
];

const colA = ["1-СТАЕН", "2-СТАЕН", "3-СТАЕН", "4-СТАЕН", "МНОГОСТАЕН", "МЕЗОНЕТ", "АТЕЛИЕ, ТАВАН"];
const colB = ["ОФИС", "МАГАЗИН", "ЗАВЕДЕНИЕ", "СКЛАД", "ХОТЕЛ", "ПРОМ. ПОМЕЩЕНИЕ"];
const regions = [
  "гр. Дряново", "гр. Плачковци", "гр. Севлиево", "гр. Трявна", "с. Агатово", "с. Азманите", "с. Ангелов",
  "с. Армените", "с. Армянковци", "с. Баева ливада", "с. Баевци",
];

const Option = ({ text, on, off }: { text: string; on?: boolean; off?: boolean }) => (
  <OptionRow>
    <Check type="checkbox" defaultChecked={on} disabled={off} />
    {text}
  </OptionRow>
);

const Build = ({ text, on }: { text: string; on?: boolean }) => (
  <BuildRow>
    <Check type="checkbox" defaultChecked={on} />
    {text}
  </BuildRow>
);

const FromTo = () => (
  <Range>
    <RangeWord>от</RangeWord>
    <Field />
    <i />
    <RangeWord>до</RangeWord>
    <Field />
  </Range>
);

/* ---------- sections ---------- */

const Browser = () => (
  <>
    <TabStrip>
      <Tab $w={299}>
        <SlackIcon />
        <TabTitle>Slack | Louis Mayer | DRONAMICS</TabTitle>
        <TabClose><Cross /></TabClose>
      </Tab>
      <TabSplit />
      <Tab $w={298}>
        <GoogleIcon />
        <TabTitle>beautifulsoup vs selenium - Google</TabTitle>
        <TabClose><Cross /></TabClose>
      </Tab>
      <Tab $w={299} $active>
        <svg width="21" height="21"><circle cx="10.5" cy="10.5" r="10.3" fill="#990000" /></svg>
        <TabTitle>Намери Обяви за Недвижими Имоти</TabTitle>
        <TabClose><Cross /></TabClose>
      </Tab>
      <NewTab>
        <svg width="16" height="16"><path d="M8 1V15M1 8H15" stroke="#111" strokeWidth="2.2" /></svg>
      </NewTab>
      <WindowButtons>
        <WinBtn $w={57}><svg width="14" height="8"><path d="M.5 .5L7 7L13.5 .5" fill="none" stroke="#333" /></svg></WinBtn>
        <WinBtn $w={57}><svg width="13" height="1"><path d="M0 .5H13" stroke="#000" /></svg></WinBtn>
        <WinBtn $w={57}><svg width="14" height="14" fill="none" stroke="#000"><path d="M.5 2.5H10.5V12.5H.5ZM2.5 2.5V.5H12.5V10.5H10.5" /></svg></WinBtn>
        <WinBtn $w={58}><svg width="14" height="14"><path d="M.5 .5L13.5 13.5M13.5 .5L.5 13.5" stroke="#222" /></svg></WinBtn>
      </WindowButtons>
    </TabStrip>
    <Toolbar>
      <ToolIcon $w={55}><svg width="17" height="16" fill="none" stroke="#505357" strokeWidth="1.8"><path d="M17 8H1.5M8.5 1L1.5 8L8.5 15" /></svg></ToolIcon>
      <ToolIcon $w={25}><svg width="17" height="16" fill="none" stroke="#a9a9a9" strokeWidth="1.8"><path d="M0 8H15.5M8.5 1L15.5 8L8.5 15" /></svg></ToolIcon>
      <ToolIcon $w={53}>
        <svg width="18" height="18" fill="none" stroke="#505357" strokeWidth="2"><path d="M15.8 11.5A7.3 7.3 0 1 1 14.5 4" /><path d="M17.5 .5V7H11Z" fill="#505357" stroke="none" /></svg>
      </ToolIcon>
      <Address>
        <svg width="12" height="15"><rect y="5" width="11" height="9.5" rx="1.5" fill="#505357" /><path d="M2.5 6V4A3 3 0 0 1 8.5 4V6" fill="none" stroke="#505357" strokeWidth="1.8" /></svg>
        <Url><b>imot.bg</b>/pcgi/imot.cgi</Url>
        <ToolIcon $w={40}>
          <svg width="20" height="18" fill="none" stroke="#5f6368" strokeWidth="1.5"><path d="M4 4H1V17H15V13" /><path d="M4.5 13C5 8.5 8 6 13 6V2L19 7.5L13 12.5V9C9 9 6.5 10 4.5 13Z" /></svg>
        </ToolIcon>
        <ToolIcon $w={38}>
          <svg width="20" height="19" viewBox="0 0 20 19" fill="none" stroke="#5f6368" strokeWidth="1.6"><path d="M10 1.8L12.3 7L18 7.6L13.7 11.3L15 17L10 14L5 17L6.3 11.3L2 7.6L7.7 7Z" /></svg>
        </ToolIcon>
      </Address>
      <ToolIcon $w={54}><Hand /></ToolIcon>
      <ToolIcon $w={26}><Abp /></ToolIcon>
      <ToolIcon $w={55}><Puzzle /></ToolIcon>
      <ToolIcon $w={24}><svg width="18" height="18"><rect x="1.2" y="1.2" width="15.6" height="15.6" fill="#ececec" stroke="#5a5d62" strokeWidth="2.4" /><rect x="11" y="1" width="6" height="16" fill="#5a5d62" /></svg></ToolIcon>
      <ToolIcon $w={58}>
        <svg width="28" height="28"><circle cx="14" cy="14" r="14" fill="#2b2c2d" /><path d="M2 8L26 10M6 5V20M8 21L20 11L17 19L10 23" stroke="#111" strokeWidth="2" fill="none" /><path d="M8 20L18 13M12 21L17 17" stroke="#7c2620" strokeWidth="1.5" /><path d="M3 9L25 9.5" stroke="#555" /></svg>
      </ToolIcon>
      <ToolIcon $w={20}><svg width="4" height="17" fill="#5a5d62"><circle cx="2" cy="2" r="2" /><circle cx="2" cy="8.5" r="2" /><circle cx="2" cy="15" r="2" /></svg></ToolIcon>
    </Toolbar>
    <Bookmarks>
      {bookmarks.map(([name, w, Icon]) => (
        <Bookmark key={name} $w={w}><Icon />{name}</Bookmark>
      ))}
    </Bookmarks>
  </>
);

const TopSection = () => (
  <Row $h={227}>
    <Col $w={600}>
      <Label>Вид на имота:</Label>
      <Row $gap={10}>
        <Col $w={182}>
          <OptionCard $h={179} $pad={7}>{colA.map((t) => <Option key={t} text={t} off />)}</OptionCard>
        </Col>
        <Col $w={182}>
          <OptionCard $h={145} $mb={6}>{colB.map((t) => <Option key={t} text={t} off />)}</OptionCard>
          <OptionCard $h={28}><Option text="БИЗНЕС ИМОТ" off /></OptionCard>
        </Col>
        <Col $w={181}>
          <OptionCard $h={77} $mb={7} $on>
            <Option text="ЕТАЖ ОТ КЪЩА" />
            <Option text="КЪЩА" on />
            <Option text="ВИЛА" on />
          </OptionCard>
          <OptionCard $h={27} $mb={6}><Option text="ПАРЦЕЛ" off /></OptionCard>
          <OptionCard $h={28} $mb={6} $top={5.4}><Option text="ГАРАЖ" off /></OptionCard>
          <OptionCard $h={28}><Option text="ЗЕМЕДЕЛСКА ЗЕМЯ" off /></OptionCard>
        </Col>
      </Row>
    </Col>
    <Col $w={250}>
      <Col $h={74}><Label>Цена на имота:</Label><FromTo /></Col>
      <Col $h={76}><Label $mb={5}>Квадратура: <span>(кв.м)</span></Label><FromTo /></Col>
      <Label $mb={7}>Етаж</Label>
      <Range>
        <RangeWord>от</RangeWord>
        <SelectBox><span /><Chevron /></SelectBox>
        <i />
        <RangeWord>до</RangeWord>
        <SelectBox><span /><Chevron /></SelectBox>
      </Range>
    </Col>
    <Col $w={325}>
      <Row $h={74}>
        <Col $w={238}><Label>Цена на кв.м площ:</Label><FromTo /></Col>
        <Col $w={87}><Label $mb={6}>Валута:</Label><SelectBox>EUR<Chevron /></SelectBox></Col>
      </Row>
      <Col $h={76}>
        <Label $plain $mb={7}>Сортиране според:</Label>
        <SelectBox>Вид/Район/Цена<Chevron /></SelectBox>
      </Col>
      <SearchButton>ТЪРСИ</SearchButton>
    </Col>
  </Row>
);

const Details = () => (
  <Col $w={512}>
    <Row>
      <Col $w={281}><Label $plain $mb={5}>Списък с районите:</Label></Col>
      <Label $plain $mb={5}>Избрани райони: <Clear>Изчисти</Clear></Label>
    </Row>
    <Row>
      <ListBox>
        <ListItems>{regions.map((r) => <div key={r}>{r}</div>)}</ListItems>
        <ListScroll><Tri color="#a3a3a3" /><ListThumb /><Tri down /></ListScroll>
      </ListBox>
      <Movers>
        <Mover><svg width="5" height="11"><path d="M0 0L5 5.5L0 11Z" fill="#800000" /></svg></Mover>
        <Mover><svg width="5" height="11"><path d="M5 0L0 5.5L5 11Z" fill="#800000" /></svg></Mover>
      </Movers>
      <ListBox>
        <ListItems>ВСИЧКИ РАЙОНИ</ListItems>
        <ListScroll><Tri color="#a3a3a3" /><Tri down color="#a3a3a3" /></ListScroll>
      </ListBox>
    </Row>
    <Keyword><KeywordText>Търсене по ключова дума:</KeywordText><Field /></Keyword>
    <Row $h={66}>
      <Col $w={242}>
        <Label $mb={2}>Квадратура на двор:<span>(кв.м)</span></Label>
        <Range $w={88} $b={11} $c={21}>
          <RangeWord>от</RangeWord><Field /><i /><RangeWord>до</RangeWord><Field />
        </Range>
      </Col>
      <Note $mt={15}>за къщи<br />и вили</Note>
    </Row>
    <Label $mb={0}>Вид строителство:</Label>
    <BuildGrid>
      <Build text="Панел" />
      <Build text="ЕПК" />
      <Build text="Гредоред" />
      <Build text="Тухла" on />
      <Build text="ПК" />
      <Build text="Сглобяема" />
      <BuildWrap>конструкция</BuildWrap>
    </BuildGrid>
    <Row $h={66}>
      <Col $w={242}>
        <Label $mb={2}>Година на строителство:</Label>
        <Range $w={88} $b={17} $c={21}>
          <RangeWord>от</RangeWord><Field /><i /><RangeWord>до</RangeWord><Field />
        </Range>
      </Col>
      <Note $mt={32}>/4 цифри/</Note>
    </Row>
    <Label>Особености:</Label>
  </Col>
);

const ChromeLogo = () => (
  <svg width="28" height="28" viewBox="0 0 28 28">
    <circle cx="14" cy="14" r="14" fill="#fbc116" />
    <path d="M14 14L1.9 7A14 14 0 0 1 26.1 7Z" fill="#e33b2e" />
    <path d="M1.9 7A14 14 0 0 0 14 28L20 17.5L14 14L8 17.5Z" fill="#229342" />
    <circle cx="14" cy="14" r="6.8" fill="#fff" />
    <circle cx="14" cy="14" r="5.3" fill="#1f72ea" />
  </svg>
);

const Planets = () => (
  <svg width="90" height="46" viewBox="0 0 90 46">
    <circle cx="13" cy="25" r="11.5" fill="#f3b557" />
    <path d="M13 13.5A11.5 11.5 0 0 1 13 36.5A16 16 0 0 0 13 13.5" fill="#f9cf83" />
    <g fill="#d18a3a"><circle cx="9" cy="21" r="2" /><circle cx="15" cy="30" r="2.2" /><circle cx="18" cy="19" r="1.5" /></g>
    <circle cx="45" cy="24.5" r="17.8" fill="#3f9cf0" />
    <path d="M45 6.7A17.8 17.8 0 0 0 45 42.3Z" fill="#3558a8" />
    <path d="M45 7C52 7 58 11 61 18L60 22L52 20L50 28L45 24ZM54 26L61 27L57 36Z" fill="#6ff0b0" />
    <path d="M45 7C39 7 33 11 30 17L31 20L38 22L40 30L45 34Z" fill="#2f9c8c" />
    <path d="M78 13l3 3 4-1 1 4 4 2-2 4 2 4-4 2-1 4-4-1-3 3-3-3-4 1-1-4-4-2 2-4-2-4 4-2 1-4 4 1z" fill="#f07a28" />
    <circle cx="78" cy="25" r="9" fill="#fbb52c" />
    <path d="M5 2l2 3 4 0-2 3 1 4-4-2-4 2 1-4-2-3 3 0z" fill="#d97bf5" />
    <circle cx="69" cy="6" r="2.5" fill="#6fd6e6" />
    <circle cx="27" cy="41" r="2.5" fill="#3fd37c" />
  </svg>
);

const WindowsBar = () => (
  <Taskbar>
    <Start>
      <svg width="20" height="21" viewBox="0 0 20 21" fill="#fff"><path d="M0 3L8.5 1.8V10H0ZM9.5 1.6L20 0V10H9.5ZM0 11H8.5V19.2L0 18ZM9.5 11H20V21L9.5 19.4Z" /></svg>
    </Start>
    <SearchBar>
      <svg width="21" height="21" fill="none" stroke="#222" strokeWidth="1.5"><circle cx="13" cy="7.5" r="6.5" /><path d="M8.5 12.5L1 20.5" /></svg>
      <SearchText>Type here to search</SearchText>
      <Planets />
    </SearchBar>
    <Task $w={60}>
      <svg width="20" height="20" fill="none" stroke="#fff"><path d="M.5 0V3.5H12.5V0M.5 5.5H12.5V14.5H.5ZM.5 20V16.5H12.5V20M18.5 0V5M18.5 10V20" /><rect x="17" y="6" width="3" height="3" fill="#fff" stroke="none" /></svg>
    </Task>
    <Task $w={61} $ml={4} $hot $run><ChromeLogo /></Task>
    <Task $w={51} $ml={6} $run>
      <svg width="28" height="24"><path d="M0 0H11L14 3H28V10H0Z" fill="#d99a0b" /><rect y="4" width="28" height="19" rx="1" fill="#fcd061" /><path d="M5 23V14Q5 12 7 12H21Q23 12 23 14V23H17V18H11V23Z" fill="#3b97d8" /></svg>
    </Task>
    <Task $w={51} $ml={11} $run>
      <svg width="27" height="27"><defs><linearGradient id="pc" x1="0" y1="0" x2="1" y2="1"><stop offset="0" stopColor="#21d789" /><stop offset=".35" stopColor="#3be04a" /><stop offset=".6" stopColor="#e6f03a" /><stop offset="1" stopColor="#c8e82a" /></linearGradient></defs><rect width="27" height="27" fill="url(#pc)" /><rect x="4" y="4" width="19" height="19" fill="#000" /><text x="5" y="14" fontSize="9.5" fontWeight="700" fontFamily="Liberation Sans, sans-serif" fill="#fff" textLength="14">PC</text><path d="M6 20H13" stroke="#fff" strokeWidth="1.5" /></svg>
    </Task>
    <Tray>
      <TrayCell $w={34}><svg width="16" height="9"><path d="M.5 8.5L8 1L15.5 8.5" fill="none" stroke="#fff" strokeWidth="1.3" /></svg></TrayCell>
      <TrayCell $w={24}>
        <svg width="21" height="16" fill="none" stroke="#fff"><path d="M.7 5.5H3.5L8 1.5V14.5L3.5 10.5H.7Z" strokeWidth="1.2" /><path d="M10.5 5.5Q12 8 10.5 10.5" /><path d="M13.5 3Q16.5 8 13.5 13M16.5 1Q21 8 16.5 15" stroke="#7d8895" /></svg>
      </TrayCell>
      <TrayCell $w={52}>ENG</TrayCell>
      <Clock>16:52<br />4.10.2022 г.</Clock>
      <TrayCell $w={42}><svg width="21" height="21" fill="none" stroke="#fff" strokeWidth="1.3"><path d="M.7 1H20.3V17H13L10.3 19.7L7.6 17H.7Z" /></svg></TrayCell>
      <TrayCell $w={14} />
      <DesktopEdge />
    </Tray>
  </Taskbar>
);

export default function App() {
  return (
    <Screen>
      <Global />
      <Browser />
      <PageArea>
        <Site>
          <Nav>
            {navTabs.map(([t, w, gap]) => (
              <NavTab key={t} $w={w} $gap={gap} $active={t === "Търсене"}>{t}</NavTab>
            ))}
          </Nav>
          <SubNav>
            {subItems.map(([t, w, sep]) => (
              <React.Fragment key={t}>
                <SubItem $w={w} $active={t === "Продава"}>
                  {t}
                  {t === "Продава" && (
                    <svg width="9" height="6"><path d="M.5 5.5L4.5 .8L8.5 5.5" fill="#fff" stroke="#b04038" /></svg>
                  )}
                </SubItem>
                {sep && <SubSep />}
              </React.Fragment>
            ))}
          </SubNav>
          <Heading>Търсене в imot.bg - Продава</Heading>
          <FormBox>
            <TopSection />
            <Row>
              <Col $w={663}>
                <Label>Местоположение на търсения от Вас Имот:</Label>
                <SelectBox $w={638}>област Габрово<Chevron /></SelectBox>
                <RegionMap />
              </Col>
              <Details />
            </Row>
          </FormBox>
        </Site>
        <PageScroll>
          <Tri />
          <PageThumb />
          <Tri down />
        </PageScroll>
      </PageArea>
      <WindowsBar />
      <Watermark>
        <MarkTitle>Activate Windows</MarkTitle>
        <MarkText>Go to Settings to activate Windows.</MarkText>
      </Watermark>
    </Screen>
  );
}
